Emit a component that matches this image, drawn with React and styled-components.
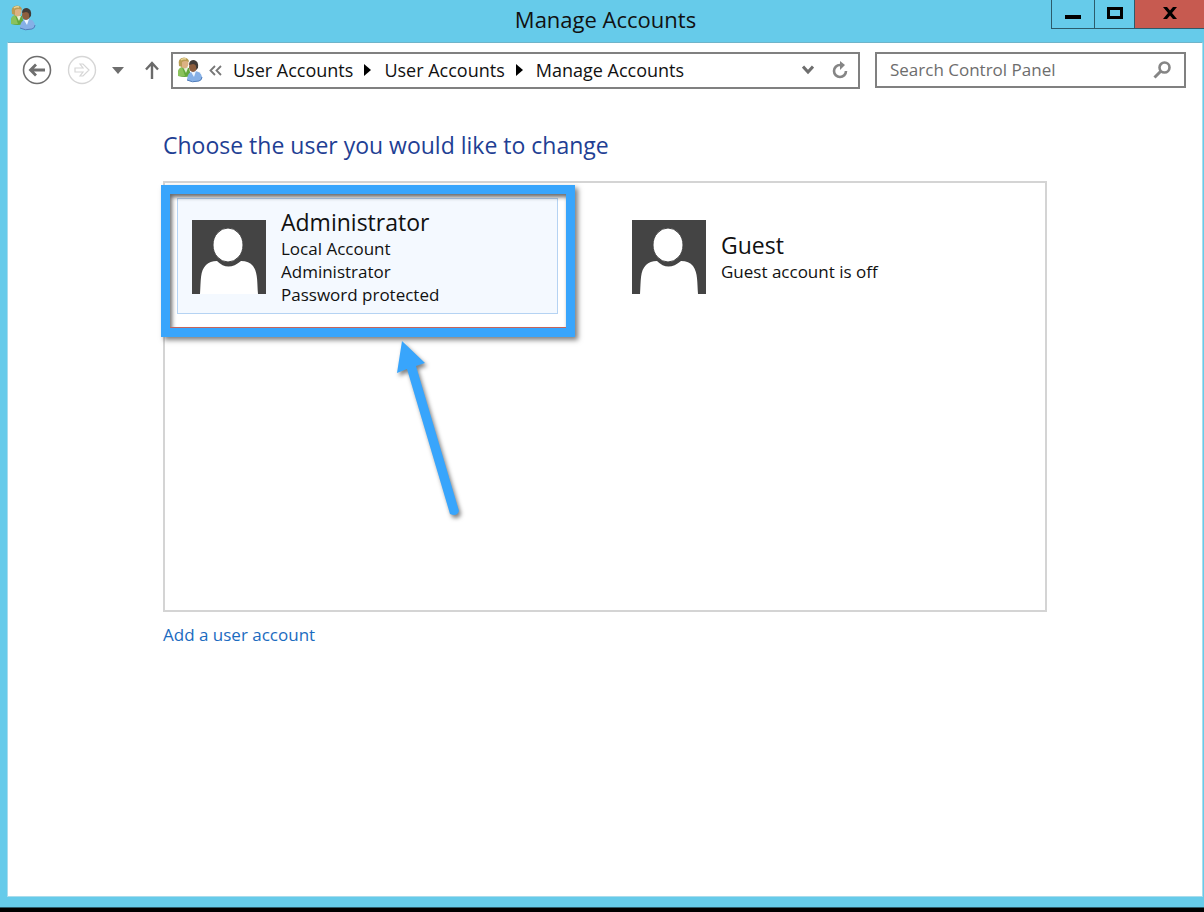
import React from "react";
import styled, { createGlobalStyle } from "styled-components";

const colors = {
  frame: "#66cbea",
  frameDark: "#2c5b6b",
  close: "#c75a50",
  heading: "#1f3f94",
  link: "#1b6bbf",
  grey: "#808080",
  avatar: "#444444",
  marker: "#38a5fc",
};

const GlobalStyle = createGlobalStyle`
  * {
    box-sizing: border-box;
  }
  body {
    margin: 0;
    background: #000;
    font-family: "Open Sans", "Noto Sans", sans-serif;
    color: #111;
  }
  button, input {
    font: inherit;
    color: inherit;
  }
`;

const Window = styled.div`
  display: flex;
  flex-direction: column;
  min-height: calc(100vh - 4px);
  background: ${colors.frame};
  padding: 0 1px 10px 7px;
  border-bottom: 1px solid ${colors.frameDark};
`;

const TitleBar = styled.header`
  display: grid;
  grid-template-columns: 1fr auto 1fr;
  height: 42px;
  margin-right: -1px;
`;

const TitleIcon = styled.div`
  padding: 4px 0 0 3px;
`;

const Title = styled.h1`
  margin: 0;
  font-size: 22px;
  line-height: 38px;
  font-weight: 400;
`;

const WindowButtons = styled.div`
  display: flex;
  justify-content: flex-end;
  align-items: flex-start;
`;

const WindowButton = styled.button`
  display: flex;
  align-items: center;
  justify-content: center;
  width: ${({ $width }) => $width}px;
  height: 29px;
  padding: 0 0 3px;
  border: solid ${colors.frameDark};
  border-width: 0 0 1px 1px;
  background: ${({ $close }) => ($close ? colors.close : "transparent")};
`;

const Content = styled.div`
  flex: 1;
  background: #fff;
  border: 1px solid #a9dcec;
  border-top-color: #6fb4c9;
`;

const NavBar = styled.nav`
  display: flex;
  align-items: center;
  height: 54px;
  padding: 0 16px 0 5px;
`;

const NavButton = styled.button`
  display: flex;
  align-items: center;
  justify-content: center;
  width: ${({ $width }) => $width}px;
  height: 32px;
  padding: 0;
  border: 0;
  background: transparent;
`;

const AddressBar = styled.div`
  display: flex;
  align-items: center;
  flex: 1;
  height: 37px;
  margin-right: 15px;
  padding: 0 2px 0 4px;
  border: 2px solid ${colors.grey};
`;

const Crumbs = styled.ol`
  display: flex;
  align-items: center;
  flex: 1;
  margin: 0;
  padding: 0 0 0 6px;
  list-style: none;
  font-size: 18px;
  line-height: 24px;
`;

const Crumb = styled.li`
  display: flex;
  align-items: center;

  svg {
    margin: 0 13px 0 11px;
  }
`;

const CrumbLink = styled.a`
  color: #111;
  text-decoration: none;
  white-space: nowrap;
`;

const SearchBox = styled.label`
  display: flex;
  align-items: center;
  width: 311px;
  height: 36px;
  padding: 0 13px;
  border: 2px solid ${colors.grey};
`;

const SearchInput = styled.input`
  flex: 1;
  min-width: 0;
  padding: 0;
  border: 0;
  outline: 0;
  font-size: 17px;
  line-height: 24px;

  &::placeholder {
    color: #6d6d6d;
    opacity: 1;
  }
`;

const Main = styled.main`
  padding: 32px 155px 0;
`;

const Heading = styled.h2`
  margin: 0 0 20px;
  font-size: 23px;
  line-height: 32px;
  font-weight: 400;
  color: ${colors.heading};
`;

const Accounts = styled.ul`
  display: grid;
  grid-template-columns: 1fr 1fr;
  align-items: start;
  min-height: 431px;
  margin: 0 0 11px;
  padding: 15px 0 0;
  border: 2px solid #d4d4d4;
  list-style: none;
`;

const Account = styled.li`
  position: relative;
  margin: 0 47px 0 12px;
`;

const AccountButton = styled.button`
  display: flex;
  align-items: center;
  gap: 15px;
  width: 100%;
  min-height: 116px;
  padding: 8px 14px 7px;
  border: 1px solid ${({ $active }) => ($active ? "#b5d3f3" : "transparent")};
  background: ${({ $active }) => ($active ? "#f4f9ff" : "transparent")};
  text-align: left;
`;

const AccountText = styled.span`
  display: flex;
  flex-direction: column;
  font-size: 17px;
  line-height: 23px;
`;

const AccountName = styled.span`
  font-size: 23px;
  line-height: 30px;
`;

// callout frame that sits over the selected account
const Marker = styled.div`
  position: absolute;
  inset: -13px -17px -23px -16px;
  border: 9px solid ${colors.marker};
  box-shadow: 3px 3px 5px rgba(0, 0, 0, 0.5), inset 2px 3px 4px rgba(0, 0, 0, 0.6);
  pointer-events: none;

  &::after {
    content: "";
    position: absolute;
    inset: auto 0 0;
    border-bottom: 1px solid #c4645c;
  }
`;

const MarkerArrow = styled.svg`
  position: absolute;
  top: 138px;
  left: 213px;
  overflow: visible;
  filter: drop-shadow(2px 3px 2px rgba(0, 0, 0, 0.5));
  pointer-events: none;
`;

const AddLink = styled.a`
  font-size: 17px;
  line-height: 23px;
  color: ${colors.link};
  text-decoration: none;
`;

const UsersIcon = () => (
  <svg width="26" height="28" viewBox="0 0 26 28" aria-hidden="true">
    <path d="M1 20 Q0 12 6 11 L12 12 L14 20 Q8 22 1 20Z" fill="#63a83c" />
    <path d="M1 20 Q0 12 5 11 L8 20Z" fill="#8ac25c" />
    <path d="M6 11 L9 17 L11 12Z" fill="#e6f1d8" />
    <ellipse cx="7.5" cy="7.5" rx="4" ry="5" fill="#dcb183" />
    <path d="M2 10 Q0 2 7 1.5 Q12 2 12 6 Q8 4 5 6 L5 11Z" fill="#b99c54" />
    <path d="M4 4 Q6 2 9 3" fill="none" stroke="#e8d699" strokeWidth="1.5" />
    <path d="M10 24 Q10 16 17 15 Q24 15 25 21 Q25 24 22 25 Q15 27 10 24Z" fill="#86b0e6" />
    <path d="M10 24 Q15 27 22 25 Q25 24 25 21" fill="none" stroke="#507dbb" />
    <path d="M14 16 L17 21 L19 15Z" fill="#edf5ff" />
    <ellipse cx="16" cy="11" rx="4" ry="5" fill="#8d5e3e" />
    <path d="M12 9 Q12 4 17 4 Q22 5 21 12 L19 14 Q20 8 16 8Z" fill="#413b37" />
  </svg>
);

const Avatar = () => (
  <svg width="74" height="74" viewBox="0 0 74 74" aria-hidden="true">
    <rect width="74" height="74" fill={colors.avatar} />
    <path d="M8 74 C9 60 8 51 14 45 Q18 41 25 41 Q36 52 49 41 Q57 41 61 46 C66 53 65 62 66 74Z" fill="#fff" />
    <ellipse cx="36" cy="25" rx="15" ry="17" fill="#fff" stroke={colors.avatar} strokeWidth="1" />
  </svg>
);

const CrumbArrow = () => (
  <svg width="7" height="12" viewBox="0 0 7 12" aria-hidden="true">
    <path d="M0 0 L7 6 L0 12Z" fill="#000" />
  </svg>
);

const crumbs = ["User Accounts", "User Accounts", "Manage Accounts"];

const accounts = [
  {
    name: "Administrator",
    details: ["Local Account", "Administrator", "Password protected"],
    active: true,
  },
  { name: "Guest", details: ["Guest account is off"] },
];

const WindowHeader = () => (
  <TitleBar>
    <TitleIcon>
      <UsersIcon />
    </TitleIcon>
    <Title>Manage Accounts</Title>
    <WindowButtons>
      <WindowButton $width={43} aria-label="Minimize">
        <svg width="16" height="14" viewBox="0 0 16 14">
          <rect y="9" width="16" height="4" />
        </svg>
      </WindowButton>
      <WindowButton $width={40} aria-label="Maximize">
        <svg width="16" height="12" viewBox="0 0 16 12">
          <rect x="1.5" y="1.5" width="13" height="9" fill="none" stroke="#000" strokeWidth="3" />
        </svg>
      </WindowButton>
      <WindowButton $width={70} $close aria-label="Close">
        <svg width="14" height="12" viewBox="0 0 14 12">
          <path d="M0 0 H4 L7 3.5 L10 0 H14 L9 6 L14 12 H10 L7 8.5 L4 12 H0 L5 6Z" />
        </svg>
      </WindowButton>
    </WindowButtons>
  </TitleBar>
);

const Navigation = () => (
  <NavBar>
    <NavButton $width={48} aria-label="Back">
      <svg width="30" height="30" viewBox="0 0 30 30" fill="none" stroke="#6e6e6e">
        <circle cx="15" cy="15" r="13.5" strokeWidth="1.6" />
        <path d="M23 15 H9 M14 9.5 L8.5 15 L14 20.5" strokeWidth="2.8" />
      </svg>
    </NavButton>
    <NavButton $width={42} aria-label="Forward">
      <svg width="30" height="30" viewBox="0 0 30 30" fill="none" stroke="#d6d6d6">
        <circle cx="15" cy="15" r="13.5" strokeWidth="1.4" />
        <path d="M8 13 H16 L13 9 H16 L22 15 L16 21 H13 L16 17 H8Z" strokeWidth="1.2" />
      </svg>
    </NavButton>
    <NavButton $width={30} aria-label="Recent locations">
      <svg width="12" height="7" viewBox="0 0 12 7">
        <path d="M0 0 H12 L6 7Z" fill="#6e6e6e" />
      </svg>
    </NavButton>
    <NavButton $width={38} aria-label="Up">
      <svg width="14" height="18" viewBox="0 0 14 18" fill="none" stroke="#6a6a6a" strokeWidth="2.4">
        <path d="M7 18 V2 M1 8.5 L7 2 L13 8.5" />
      </svg>
    </NavButton>
    <AddressBar>
      <UsersIcon />
      <NavButton $width={24} aria-label="Show more locations">
        <svg width="13" height="11" viewBox="0 0 13 11" fill="none" stroke="#777" strokeWidth="1.8">
          <path d="M6 1 L1.5 5.5 L6 10 M12 1 L7.5 5.5 L12 10" />
        </svg>
      </NavButton>
      <Crumbs>
        {crumbs.map((crumb, index) => (
          <Crumb key={index}>
            {index > 0 && <CrumbArrow />}
            <CrumbLink href="#">{crumb}</CrumbLink>
          </Crumb>
        ))}
      </Crumbs>
      <NavButton $width={32} aria-label="Previous locations">
        <svg width="12" height="10" viewBox="0 0 12 10" fill="none" stroke="#6e6e6e" strokeWidth="3">
          <path d="M1 1.5 L6 7 L11 1.5" />
        </svg>
      </NavButton>
      <NavButton $width={32} aria-label="Refresh">
        <svg width="16" height="18" viewBox="0 0 16 18" fill="none" stroke="#858585" strokeWidth="2.6">
          <path d="M9 4 H8 A6 6 0 1 0 14 10" />
          <path d="M8 0 L13 4 L8 9Z" fill="#858585" stroke="none" />
        </svg>
      </NavButton>
    </AddressBar>
    <SearchBox>
      <SearchInput type="text" placeholder="Search Control Panel" aria-label="Search Control Panel" />
      <svg width="18" height="18" viewBox="0 0 18 18" fill="none" stroke="#858585" aria-hidden="true">
        <circle cx="11.5" cy="6.5" r="5" strokeWidth="2.6" />
        <path d="M8 10 L1.5 16.5" strokeWidth="3" />
      </svg>
    </SearchBox>
  </NavBar>
);

export const App = () => {
  return (
    <>
      <GlobalStyle />
      <Window>
        <WindowHeader />
        <Content>
          <Navigation />
          <Main>
            <Heading>Choose the user you would like to change</Heading>
            <Accounts>
              {accounts.map((account) => (
                <Account key={account.name}>
                  <AccountButton $active={account.active}>
                    <Avatar />
                    <AccountText>
                      <AccountName>{account.name}</AccountName>
                      {account.details.map((detail) => (
                        <span key={detail}>{detail}</span>
                      ))}
                    </AccountText>
                  </AccountButton>
                  {account.active && (
                    <>
                      <Marker />
                      <MarkerArrow width="70" height="184" viewBox="0 0 70 184" aria-hidden="true">
                        <path d="M12 5 L35 27 L26 30 L69 175 Q67 181 60 178 L17 33 L7 37Z" fill={colors.marker} />
                      </MarkerArrow>
                    </>
                  )}
                </Account>
              ))}
            </Accounts>
            <AddLink href="#">Add a user account</AddLink>
          </Main>
        </Content>
      </Window>
    </>
  );
};

export default App;
